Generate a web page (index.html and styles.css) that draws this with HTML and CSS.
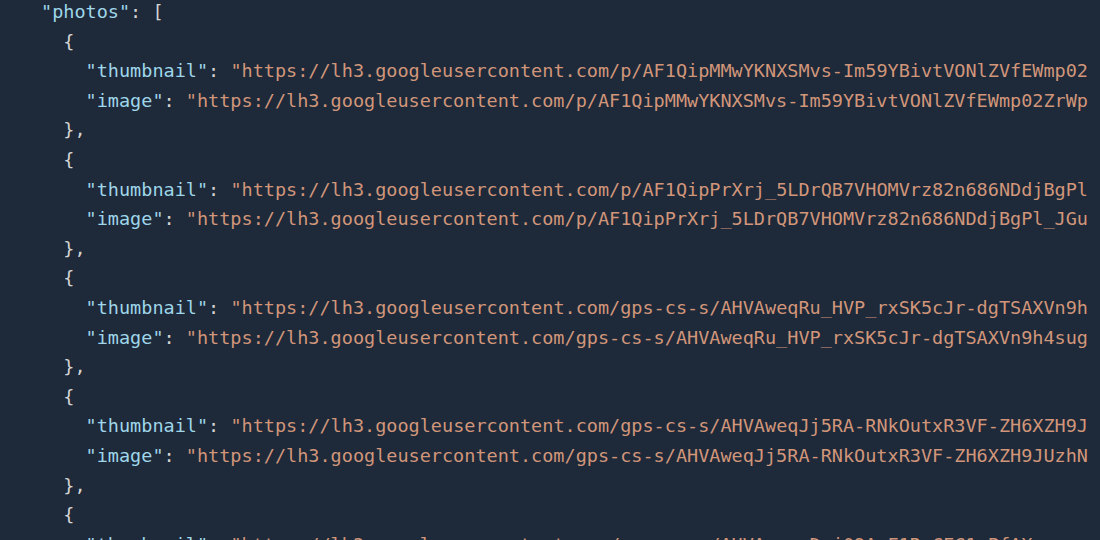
FILE: index.html
```html
<!DOCTYPE html>
<html lang="en">
<head>
<meta charset="utf-8">
<title>photos JSON</title>
<link rel="stylesheet" href="styles.css">
</head>
<body>
<main class="viewer">
<pre class="code"><span class="k">"photos"</span><span class="p">: [</span>
<span class="p">  {</span>
    <span class="k">"thumbnail"</span><span class="p">: </span><span class="s">"https://lh3.googleusercontent.com/p/AF1QipMMwYKNXSMvs-Im59YBivtVONlZVfEWmp02ZrWpQx7e=w100-h100"</span><span class="p">,</span>
    <span class="k">"image"</span><span class="p">: </span><span class="s">"https://lh3.googleusercontent.com/p/AF1QipMMwYKNXSMvs-Im59YBivtVONlZVfEWmp02ZrWpQx7e=w1200"</span>
<span class="p">  },</span>
<span class="p">  {</span>
    <span class="k">"thumbnail"</span><span class="p">: </span><span class="s">"https://lh3.googleusercontent.com/p/AF1QipPrXrj_5LDrQB7VHOMVrz82n686NDdjBgPl_JGuTm=w100-h100"</span><span class="p">,</span>
    <span class="k">"image"</span><span class="p">: </span><span class="s">"https://lh3.googleusercontent.com/p/AF1QipPrXrj_5LDrQB7VHOMVrz82n686NDdjBgPl_JGuTm=w1200"</span>
<span class="p">  },</span>
<span class="p">  {</span>
    <span class="k">"thumbnail"</span><span class="p">: </span><span class="s">"https://lh3.googleusercontent.com/gps-cs-s/AHVAweqRu_HVP_rxSK5cJr-dgTSAXVn9h4sugXq=w100-h100"</span><span class="p">,</span>
    <span class="k">"image"</span><span class="p">: </span><span class="s">"https://lh3.googleusercontent.com/gps-cs-s/AHVAweqRu_HVP_rxSK5cJr-dgTSAXVn9h4sugXq=w1200"</span>
<span class="p">  },</span>
<span class="p">  {</span>
    <span class="k">"thumbnail"</span><span class="p">: </span><span class="s">"https://lh3.googleusercontent.com/gps-cs-s/AHVAweqJj5RA-RNkOutxR3VF-ZH6XZH9JUzhNa=w100-h100"</span><span class="p">,</span>
    <span class="k">"image"</span><span class="p">: </span><span class="s">"https://lh3.googleusercontent.com/gps-cs-s/AHVAweqJj5RA-RNkOutxR3VF-ZH6XZH9JUzhNa=w1200"</span>
<span class="p">  },</span>
<span class="p">  {</span>
    <span class="k">"thumbnail"</span><span class="p">: </span><span class="s">"https://lh3.googleusercontent.com/gps-cs-s/AHVAweqwDyj09A_F1RqCEC1_PfAXsrnuewa=w100-h100"</span><span class="p">,</span>
</pre>
</main>
</body>
</html>
```

FILE: styles.css
```css
html, body {
  margin: 0;
  padding: 0;
  background: #1e2939;
  height: 100%;
  overflow: hidden;
}

.viewer {
  width: 1088px;
  height: 540px;
  overflow: hidden;
  background: #1e2939;
}

.code {
  margin: -3px 0 0 0;
  padding-left: 41px;
  font-family: "DejaVu Sans Mono", "Liberation Mono", monospace;
  font-size: 18.5px;
  line-height: 29.6px;
  color: #d4d4d4;
  white-space: pre;
}

.k { color: #9fd6e9; }
.s { color: #d1967a; }
.p { color: #d4d4d4; }
```
